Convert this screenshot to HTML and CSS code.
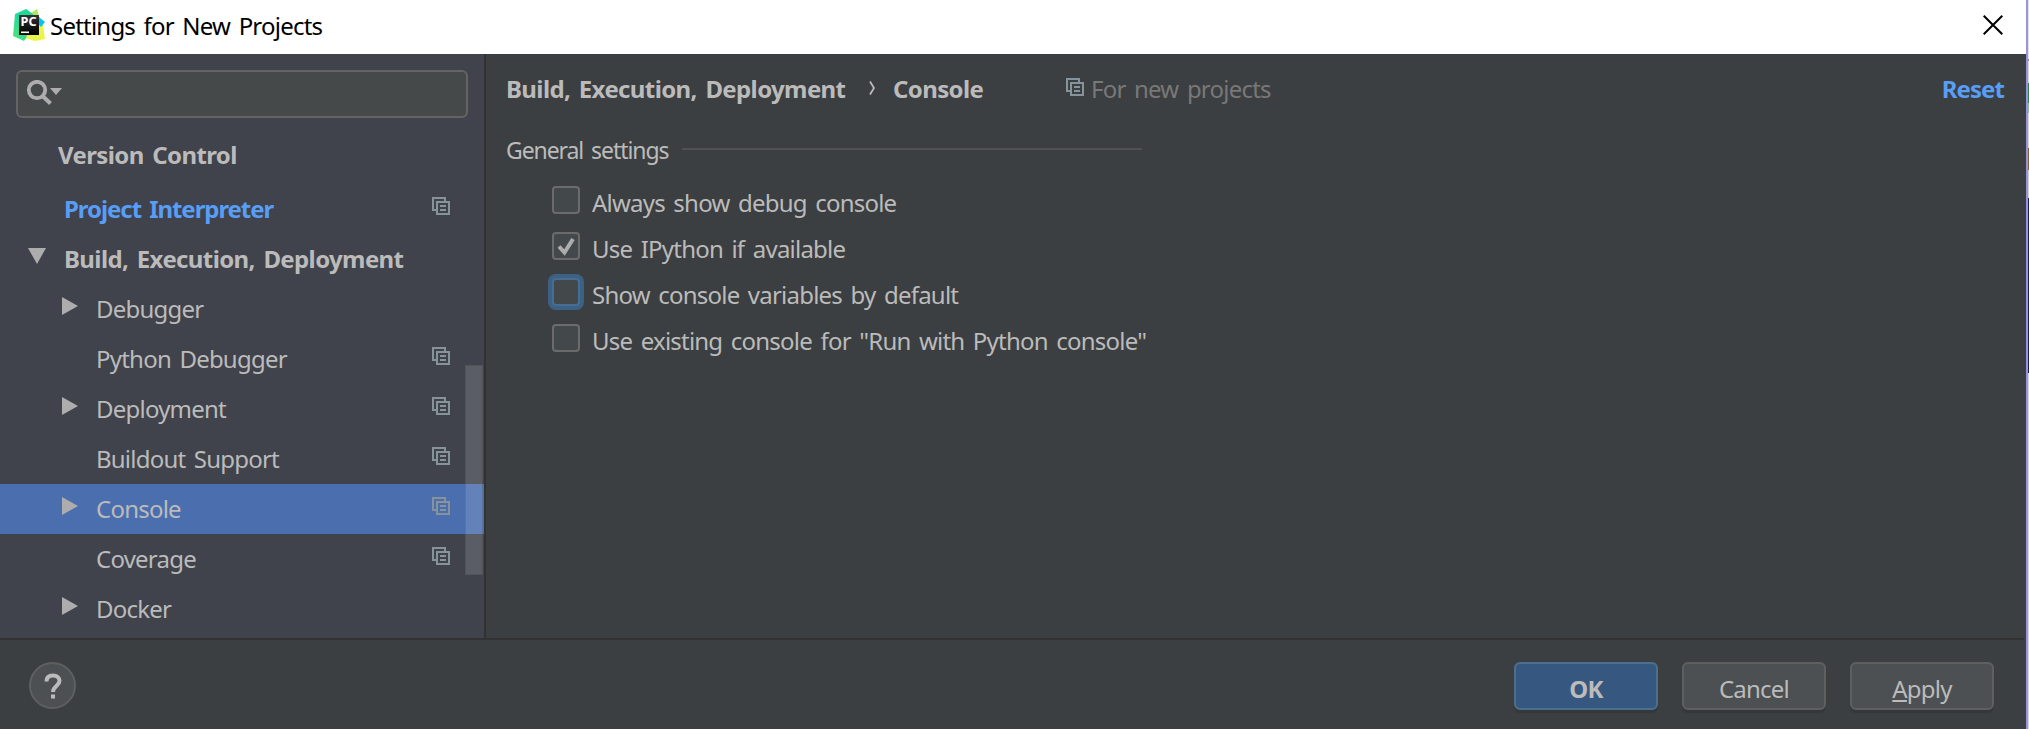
FILE: index.html
```html
<!DOCTYPE html>
<html lang="en">
<head>
<meta charset="utf-8">
<title>Settings for New Projects</title>
<link rel="stylesheet" href="styles.css">
</head>
<body>
<svg class="defs" width="0" height="0" aria-hidden="true">
  <symbol id="copy" viewBox="0 0 18 18"><path d="M13 4V1H1v12h3M5 5h12v12H5zM8 9h6M8 13h6" fill="none" stroke="currentColor" stroke-width="2"/></symbol>
  <symbol id="right" viewBox="0 0 16 18"><path d="M0 0L16 9L0 18z" fill="#adadad"/></symbol>
</svg>
<div class="frame">
<div class="window">
  <header class="titlebar">
    <svg class="logo" width="32" height="32" viewBox="0 0 32 32">
      <defs><linearGradient id="g" x1="1" y1="0" x2="0" y2="1"><stop offset="0" stop-color="#21d789"/><stop offset=".5" stop-color="#1edb9e"/><stop offset="1" stop-color="#5be36e"/></linearGradient>
      <linearGradient id="b" x1="0" y1="0" x2="0" y2="1"><stop offset="0" stop-color="#333"/><stop offset="1" stop-color="#000"/></linearGradient></defs>
      <path d="M16 5L24 0L26 8L30 15L32 30L22 32L12 29z" fill="#e9f54b"/>
      <path d="M18 5L24 0L26 9z" fill="#a5ea6b"/>
      <path d="M26 8L32 13L28 18L24 14z" fill="#07c3f2"/>
      <path d="M2 5L13 0L20 5L13 29L11 32L0 27z" fill="url(#g)"/>
      <rect x="6" y="6" width="20" height="20" fill="url(#b)"/>
      <rect x="8" y="22.5" width="8" height="1.6" fill="#fff"/>
      <text x="7.6" y="17" class="logo-text" textLength="16" lengthAdjust="spacingAndGlyphs">PC</text>
    </svg>
    <span class="title">Settings for New Projects</span>
    <svg class="close" width="20" height="20" viewBox="0 0 20 20"><path d="M.7 .7L19.3 19.3M19.3 .7L.7 19.3" stroke="#000" stroke-width="2"/></svg>
  </header>
  <div class="main">
    <aside class="sidebar">
      <div class="search"><svg width="36" height="26" viewBox="0 0 36 26"><circle cx="11" cy="10" r="8.2" fill="none" stroke="#adadad" stroke-width="3.8"/><path d="M16.500 16l8 7.500" stroke="#adadad" stroke-width="4"/><path d="M24 8h12l-6 7z" fill="#adadad"/></svg></div>
      <div class="row vcs"><b class="label">Version Control</b></div>
      <div class="tree">
        <div class="row top link"><span class="arrow"></span><b class="label">Project Interpreter</b><svg class="copy"><use href="#copy"/></svg></div>
        <div class="row top"><span class="arrow"><svg width="18" height="16"><path d="M0 0h18L9 16z" fill="#adadad"/></svg></span><b class="label">Build, Execution, Deployment</b></div>
        <div class="row"><span class="arrow"><svg width="16" height="18"><use href="#right"/></svg></span><span class="label">Debugger</span></div>
        <div class="row"><span class="arrow"></span><span class="label">Python Debugger</span><svg class="copy"><use href="#copy"/></svg></div>
        <div class="row"><span class="arrow"><svg width="16" height="18"><use href="#right"/></svg></span><span class="label">Deployment</span><svg class="copy"><use href="#copy"/></svg></div>
        <div class="row"><span class="arrow"></span><span class="label">Buildout Support</span><svg class="copy"><use href="#copy"/></svg></div>
        <div class="row selected"><span class="arrow"><svg width="16" height="18"><use href="#right"/></svg></span><span class="label">Console</span><svg class="copy"><use href="#copy"/></svg></div>
        <div class="row"><span class="arrow"></span><span class="label">Coverage</span><svg class="copy"><use href="#copy"/></svg></div>
        <div class="row"><span class="arrow"><svg width="16" height="18"><use href="#right"/></svg></span><span class="label">Docker</span></div>
      </div>
      <div class="scroll"></div>
    </aside>
    <section class="content">
      <div class="crumbs">
        <b class="parent">Build, Execution, Deployment</b>
        <svg class="chev" width="6" height="14"><path d="M1 .5L5 7L1 13.5" fill="none" stroke="#bbb" stroke-width="1.8"/></svg>
        <b class="current">Console</b>
        <svg class="copy"><use href="#copy"/></svg>
        <span class="hint">For new projects</span>
        <b class="reset">Reset</b>
      </div>
      <div class="group"><span>General settings</span><i></i></div>
      <div class="checks">
        <label class="check"><span class="box"></span><span class="text">Always show debug console</span></label>
        <label class="check"><span class="box"><svg width="24" height="24"><path d="M5 12.500l5.500 6L19 5" fill="none" stroke="#adadad" stroke-width="4"/></svg></span><span class="text">Use IPython if available</span></label>
        <label class="check"><span class="box focus"></span><span class="text">Show console variables by default</span></label>
        <label class="check"><span class="box"></span><span class="text">Use existing console for "Run with Python console"</span></label>
      </div>
    </section>
  </div>
  <footer class="footer">
    <div class="help"><svg width="18" height="26" viewBox="0 0 18 26"><path d="M2.500 8.500C2.500 4.500 5 2.500 9 2.500S15.500 4.500 15.500 8C15.500 12.500 9 13 9 19" fill="none" stroke="#bbb" stroke-width="4"/><path d="M7 21.500h4v4H7z" fill="#bbb"/></svg></div>
    <div class="btn ok"><b>OK</b></div><div class="btn">Cancel</div><div class="btn"><span><u>A</u>pply</span></div>
  </footer>
</div>
<div class="edge"></div>
<div class="behind"></div>
</div>
</body>
</html>
```
FILE: styles.css
```css
* { box-sizing: border-box; }
html { height: 729px; overflow: hidden; }
body { margin: 0; height: 729px; overflow: hidden; background: #3c3f41; color: #bbb; font: 24px/30px "Noto Sans", sans-serif; letter-spacing: -0.78px; word-spacing: 3px; white-space: nowrap; }
b { font-weight: 700; letter-spacing: -0.62px; }
.defs { position: absolute; }
.frame { display: flex; height: 729px; overflow: hidden; }
.window { width: 2026px; display: flex; flex-direction: column; }
.edge { width: 2px; background: #9a94da; }
.behind { width: 1px; background: linear-gradient(#e4e4e4 59px, #888 59px 61px, #d8d8d8 61px 83px, #0a9a3c 83px 103px, #7fc48f 103px 113px, #d8d8d8 113px 148px, #97600c 148px 170px, #d0d0d0 170px 198px, #1c1c60 198px 373px, #d5d5ee 373px); }
.titlebar { height: 54px; background: #fff; color: #000; display: flex; align-items: center; padding: 0 23px 4px 13px; }
.title { margin-left: 5px; padding-top: 2px; }
.logo-text { font: 700 12px "Noto Sans", sans-serif; fill: #fff; letter-spacing: 0; }
.close { margin-left: auto; }
.main { height: 584px; display: flex; }
.sidebar { position: relative; width: 486px; background: #40434b; border-right: 2px solid #323232; padding-top: 16px; overflow: hidden; }
.search { width: 452px; height: 48px; margin-left: 16px; border: 2px solid #646464; border-radius: 6px; background: #45494a; padding: 8px 0 0 8px; }
.search svg { display: block; }
.row { height: 50px; display: flex; align-items: center; padding: 0 34px 0 62px; }
.vcs { height: 66px; padding: 7px 0 0 58px; }
.arrow { width: 34px; display: flex; margin-top: -6px; }
.top { padding-left: 28px; }
.top .arrow { width: 36px; }
.link { color: #589df6; }
.link .label { letter-spacing: -1.06px; }
.copy { width: 18px; height: 18px; color: #87939a; margin-left: auto; margin-top: -7px; }
.selected { background: #4b6eaf; }
.scroll { position: absolute; left: 465px; top: 311px; width: 18px; height: 210px; background: rgba(255,255,255,.14); border: 1px solid rgba(50,50,50,.2); }
.content { flex: 1; padding: 20px 22px 0 20px; }
.crumbs { display: flex; align-items: center; height: 30px; }
.parent { width: 338px; }
.current { width: 92px; }
.chev { margin: -3px 18px 0 25px; }
.crumbs .copy { margin: -4px 7px 0 81px; }
.hint { color: #787878; }
.reset { margin-left: auto; color: #589df6; letter-spacing: -0.9px; }
.group { display: flex; align-items: center; margin-top: 30px; height: 32px; font-size: 23px; letter-spacing: -1.08px; }
.group span { width: 164px; }
.group i { width: 460px; height: 2px; background: #515151; margin-left: 12px; margin-top: -3px; }
.checks { padding: 20px 0 0 46px; }
.check { display: flex; height: 46px; align-items: flex-start; }
.text { margin: 2px 0 0 12px; }
.box { width: 28px; height: 28px; border: 2px solid #6b6b6b; border-radius: 4px; background: #43494a; }
.box svg { display: block; }
.focus { border-color: #466d94; box-shadow: 0 0 0 4px #3d6185; }
.footer { flex: 1; background: linear-gradient(#323232, #323232) 0 0 / 2024px 2px no-repeat; display: flex; align-items: flex-start; padding: 24px 32px 0 29px; }
.help { width: 47px; height: 47px; border: 2px solid #5e6060; border-radius: 50%; background: #4c5052; margin-right: auto; padding: 9px 0 0 13px; }
.btn { width: 144px; height: 48px; border: 2px solid #5e6060; border-radius: 6px; background: #4c5052; box-shadow: 0 3px 1px #35383a; display: flex; justify-content: center; align-items: center; padding-top: 5px; margin-left: 24px; }
.ok { background: #365880; border-color: #4c708c; }
```
